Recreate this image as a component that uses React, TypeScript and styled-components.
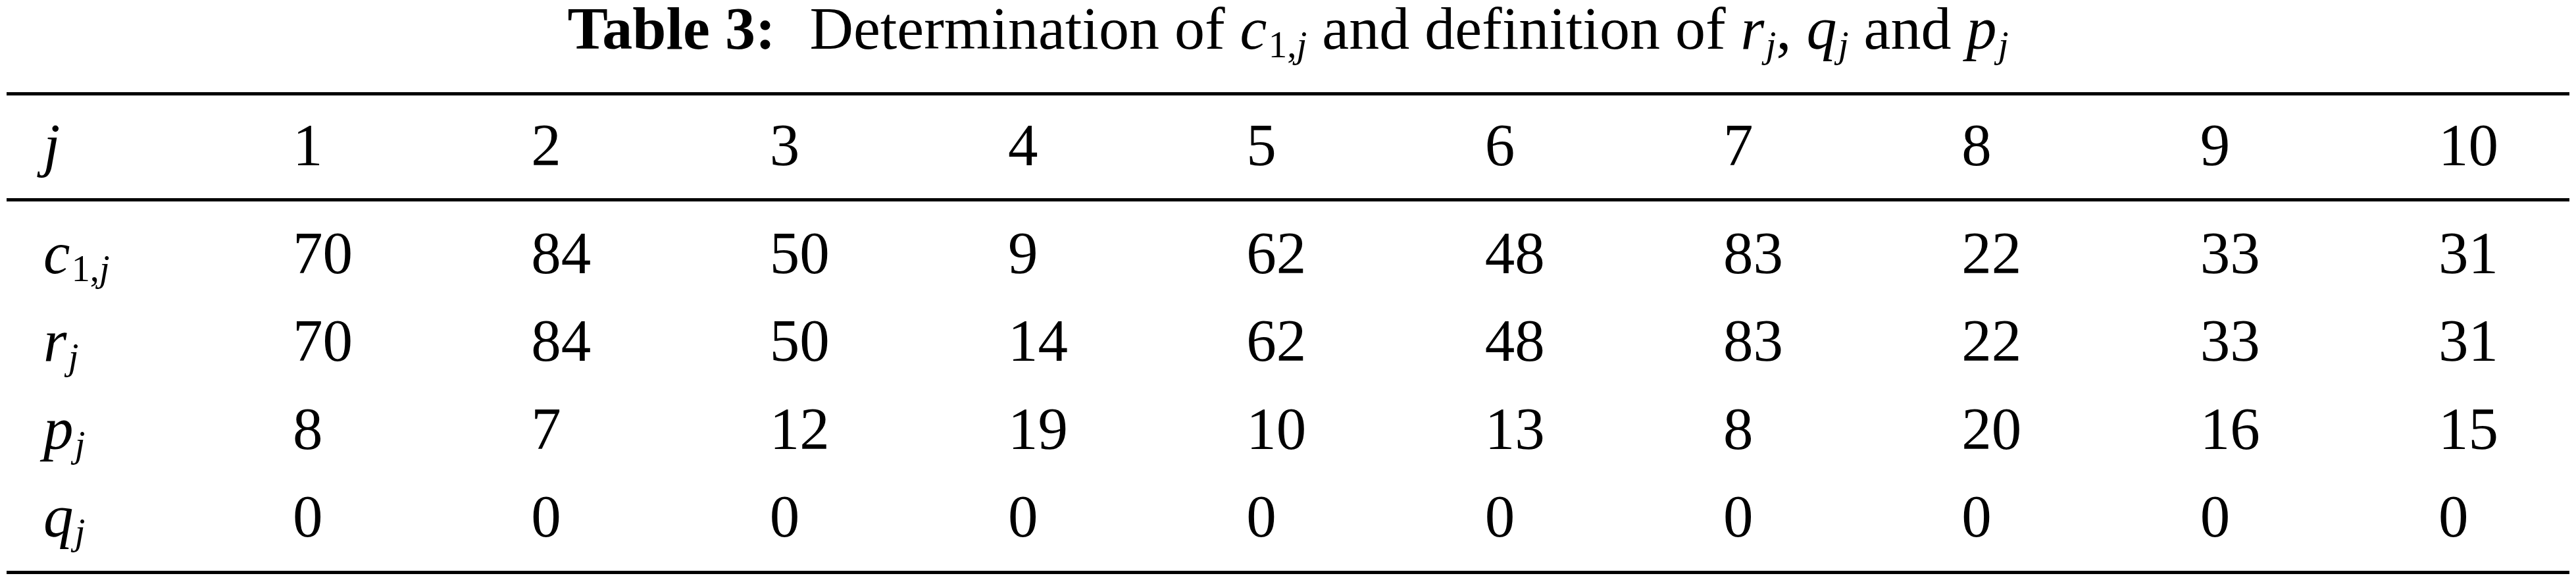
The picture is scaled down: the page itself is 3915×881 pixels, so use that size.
import React from "react";
import styled, { createGlobalStyle } from "styled-components";

const GlobalStyle = createGlobalStyle`
  html, body {
    margin: 0;
    padding: 0;
    background: #ffffff;
  }
  body {
    font-family: "Liberation Serif", "Times New Roman", serif;
    color: #000000;
  }
`;

const COLUMNS = "435px repeat(9, 362.33px) 1fr";

const Figure = styled.div`
  width: 3895px;
  margin-left: 10px;
  font-size: 91px;
`;

const Caption = styled.div`
  height: 86px;
  line-height: 86px;
  margin-bottom: 54px;
  font-size: 92px;
  text-align: center;
  white-space: nowrap;
`;

const CaptionLabel = styled.span`
  font-weight: 700;
  margin-right: 52px;
`;

const Table = styled.div`
  border-top: 5px solid #000;
  border-bottom: 5px solid #000;
`;

const HeaderRow = styled.div`
  display: grid;
  grid-template-columns: ${COLUMNS};
  height: 156px;
  line-height: 152px;
  border-bottom: 5px solid #000;
`;

const Body = styled.div`
  padding: 12px 0 16px;
`;

const Row = styled.div`
  display: grid;
  grid-template-columns: ${COLUMNS};
  height: 133.33px;
  line-height: 133.33px;
`;

const LabelCell = styled.div`
  padding-left: 56px;
  white-space: nowrap;
`;

const ValueCell = styled.div`
  white-space: nowrap;
`;

const Var = styled.i`
  font-style: italic;
`;

// subscript shifted with relative positioning so the line box keeps its height
const Sub = styled.span`
  position: relative;
  top: 0.22em;
  font-size: 0.62em;
  line-height: 1;
  margin-left: 0.04em;
`;

type RowData = {
  key: string;
  label: React.ReactNode;
  values: number[];
};

const rows: RowData[] = [
  {
    key: "c",
    label: (
      <>
        <Var>c</Var>
        <Sub>
          1,<Var>j</Var>
        </Sub>
      </>
    ),
    values: [70, 84, 50, 9, 62, 48, 83, 22, 33, 31],
  },
  {
    key: "r",
    label: (
      <>
        <Var>r</Var>
        <Sub>
          <Var>j</Var>
        </Sub>
      </>
    ),
    values: [70, 84, 50, 14, 62, 48, 83, 22, 33, 31],
  },
  {
    key: "p",
    label: (
      <>
        <Var>p</Var>
        <Sub>
          <Var>j</Var>
        </Sub>
      </>
    ),
    values: [8, 7, 12, 19, 10, 13, 8, 20, 16, 15],
  },
  {
    key: "q",
    label: (
      <>
        <Var>q</Var>
        <Sub>
          <Var>j</Var>
        </Sub>
      </>
    ),
    values: [0, 0, 0, 0, 0, 0, 0, 0, 0, 0],
  },
];

const jobs = [1, 2, 3, 4, 5, 6, 7, 8, 9, 10];

export default function App() {
  return (
    <>
      <GlobalStyle />
      <Figure>
        <Caption>
          <CaptionLabel>Table 3:</CaptionLabel>
          Determination of <Var>c</Var>
          <Sub>
            1,<Var>j</Var>
          </Sub>{" "}
          and definition of <Var>r</Var>
          <Sub>
            <Var>j</Var>
          </Sub>
          , <Var>q</Var>
          <Sub>
            <Var>j</Var>
          </Sub>{" "}
          and <Var>p</Var>
          <Sub>
            <Var>j</Var>
          </Sub>
        </Caption>
        <Table>
          <HeaderRow>
            <LabelCell>
              <Var>j</Var>
            </LabelCell>
            {jobs.map((j) => (
              <ValueCell key={j}>{j}</ValueCell>
            ))}
          </HeaderRow>
          <Body>
            {rows.map((row) => (
              <Row key={row.key}>
                <LabelCell>{row.label}</LabelCell>
                {row.values.map((v, i) => (
                  <ValueCell key={i}>{v}</ValueCell>
                ))}
              </Row>
            ))}
          </Body>
        </Table>
      </Figure>
    </>
  );
}
